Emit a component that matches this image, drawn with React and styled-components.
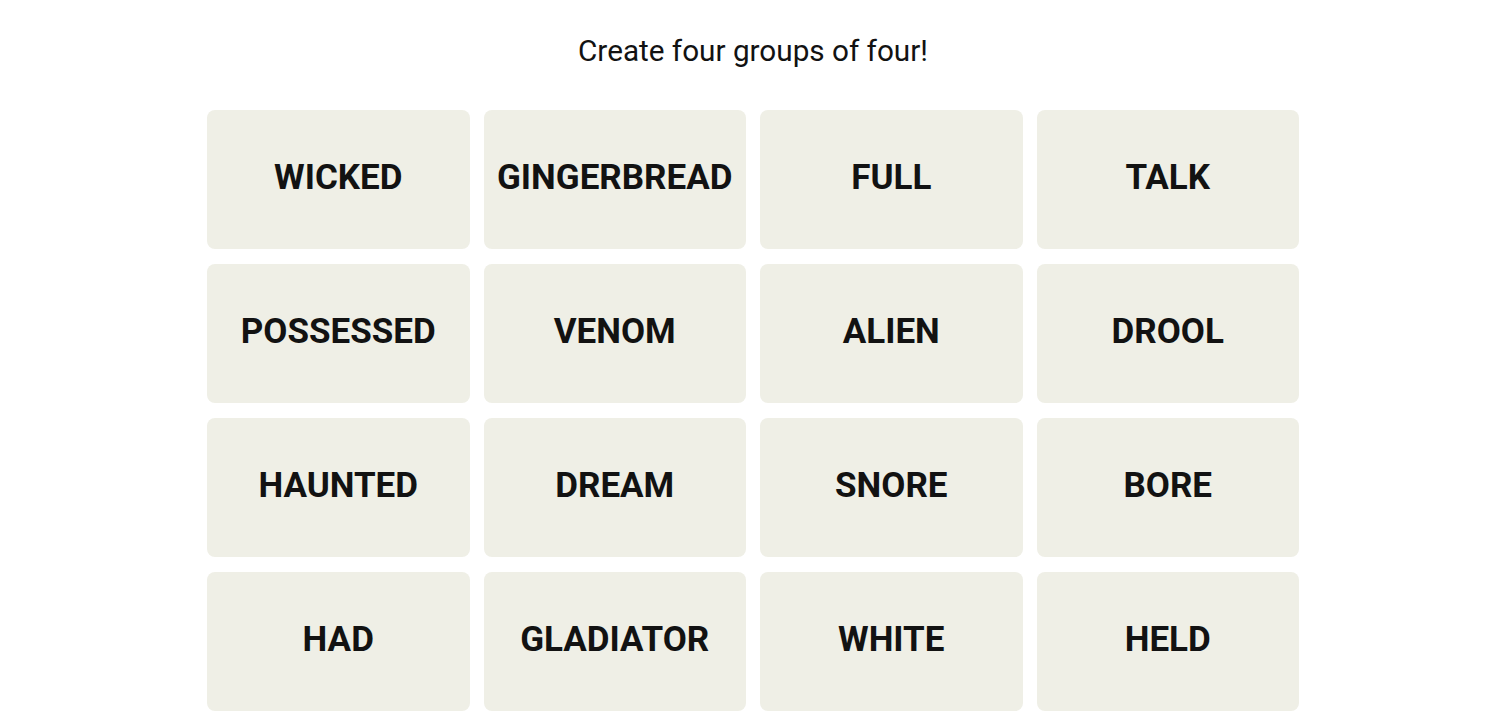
import React from 'react'
import styled, { createGlobalStyle } from 'styled-components'

const GlobalStyle = createGlobalStyle`
  html, body {
    margin: 0;
    padding: 0;
    background: #ffffff;
  }
  body {
    font-family: Roboto, "Liberation Sans", sans-serif;
    color: #121212;
  }
`

const Page = styled.div`
  display: flex;
  flex-direction: column;
  align-items: center;
  padding: 30px 0 0 6px;
`

const Title = styled.h1`
  margin: 0;
  font-size: 29.7px;
  font-weight: 400;
  line-height: 41px;
  color: #121212;
`

const Board = styled.div`
  display: grid;
  grid-template-columns: repeat(4, 1fr);
  column-gap: 14px;
  row-gap: 15px;
  width: 1092px;
  margin-top: 39px;
`

const Tile = styled.button`
  height: 139px;
  border: none;
  border-radius: 8px;
  background: #efefe6;
  color: #121212;
  font-family: Roboto, "Liberation Sans", sans-serif;
  font-weight: 700;
  font-size: 35px;
  text-transform: uppercase;
  display: flex;
  align-items: center;
  justify-content: center;
  padding: 0 0 4px;
  cursor: pointer;
`

const words = [
  'WICKED', 'GINGERBREAD', 'FULL', 'TALK',
  'POSSESSED', 'VENOM', 'ALIEN', 'DROOL',
  'HAUNTED', 'DREAM', 'SNORE', 'BORE',
  'HAD', 'GLADIATOR', 'WHITE', 'HELD',
]

const App = () => {
  return (
    <>
      <GlobalStyle />
      <Page>
        <Title>Create four groups of four!</Title>
        <Board>
          {words.map(w => <Tile key={w}>{w}</Tile>)}
        </Board>
      </Page>
    </>
  )
}

export default App
